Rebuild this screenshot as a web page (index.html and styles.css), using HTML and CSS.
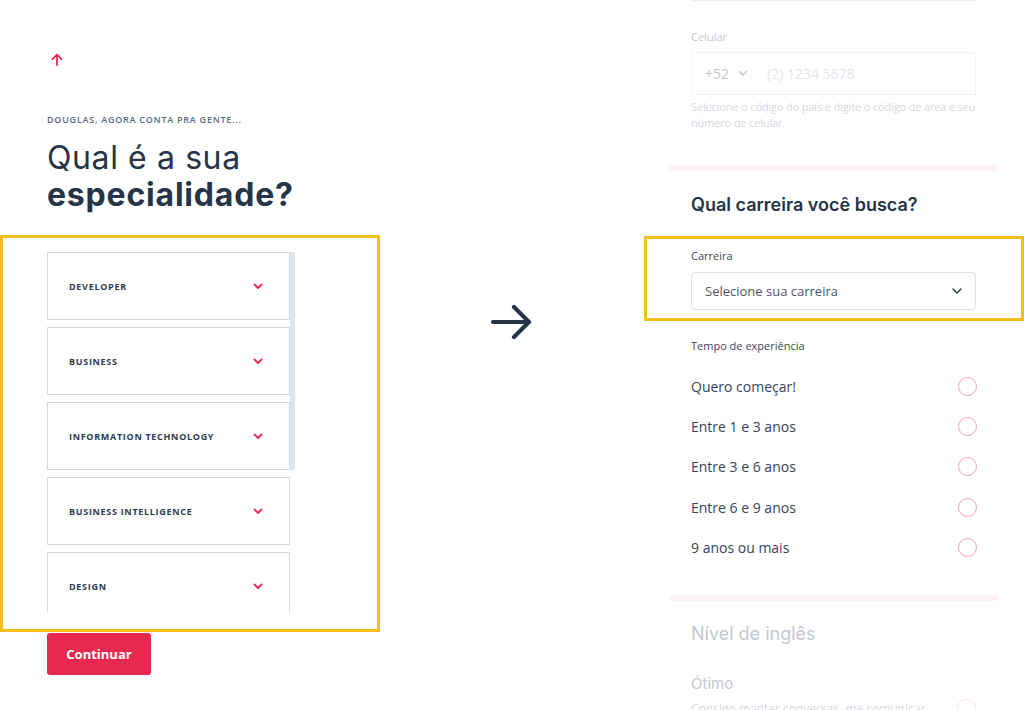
FILE: index.html
```html
<!DOCTYPE html>
<html lang="pt-BR">
<head>
  <meta charset="UTF-8">
  <title>Especialidade</title>
  <link rel="stylesheet" href="styles.css">
</head>
<body>
  <div class="page">

    <!-- Left: old flow -->
    <section class="left">
      <div class="back">
        <svg width="12" height="13" viewBox="0 0 12 13"><path d="M6 12V2M1.5 6.2L6 1.5l4.5 4.7" fill="none" stroke="#e8294f" stroke-width="1.8" stroke-linecap="round" stroke-linejoin="round"/></svg>
      </div>
      <p class="eyebrow">DOUGLAS, AGORA CONTA PRA GENTE...</p>
      <h1 class="title">Qual é a sua<br><strong>especialidade?</strong></h1>

      <div class="highlight highlight-left">
        <div class="list">
          <div class="cards">
            <div class="card"><span>DEVELOPER</span><svg class="chev" width="10" height="7" viewBox="0 0 10 7"><path d="M1.5 1.5L5 5l3.5-3.5" fill="none" stroke="#e8294f" stroke-width="1.8" stroke-linecap="round" stroke-linejoin="round"/></svg></div>
            <div class="card"><span>BUSINESS</span><svg class="chev" width="10" height="7" viewBox="0 0 10 7"><path d="M1.5 1.5L5 5l3.5-3.5" fill="none" stroke="#e8294f" stroke-width="1.8" stroke-linecap="round" stroke-linejoin="round"/></svg></div>
            <div class="card"><span>INFORMATION TECHNOLOGY</span><svg class="chev" width="10" height="7" viewBox="0 0 10 7"><path d="M1.5 1.5L5 5l3.5-3.5" fill="none" stroke="#e8294f" stroke-width="1.8" stroke-linecap="round" stroke-linejoin="round"/></svg></div>
            <div class="card"><span>BUSINESS INTELLIGENCE</span><svg class="chev" width="10" height="7" viewBox="0 0 10 7"><path d="M1.5 1.5L5 5l3.5-3.5" fill="none" stroke="#e8294f" stroke-width="1.8" stroke-linecap="round" stroke-linejoin="round"/></svg></div>
            <div class="card"><span>DESIGN</span><svg class="chev" width="10" height="7" viewBox="0 0 10 7"><path d="M1.5 1.5L5 5l3.5-3.5" fill="none" stroke="#e8294f" stroke-width="1.8" stroke-linecap="round" stroke-linejoin="round"/></svg></div>
          </div>
          <div class="scrollbar"><div class="thumb"></div></div>
        </div>
      </div>

      <button class="btn-continue">Continuar</button>
    </section>

    <!-- Middle arrow -->
    <div class="middle">
      <svg width="44" height="40" viewBox="0 0 44 40"><path d="M3 20h36M24 5l15 15-15 15" fill="none" stroke="#253447" stroke-width="4.2" stroke-linecap="round" stroke-linejoin="round"/></svg>
    </div>

    <!-- Right: new flow -->
    <section class="right">
      <div class="faded">
        <div class="prev-line"></div>
        <label class="field-label">Celular</label>
        <div class="phone">
          <span class="code">+52</span>
          <svg width="10" height="7" viewBox="0 0 10 7"><path d="M1.5 1.5L5 5l3.5-3.5" fill="none" stroke="#c3c8d2" stroke-width="1.5" stroke-linecap="round" stroke-linejoin="round"/></svg>
          <span class="placeholder">(2) 1234 5678</span>
        </div>
        <p class="help">Selecione o código do país e digite o código de área e seu número de celular.</p>
      </div>

      <div class="divider"></div>

      <h2 class="section-title">Qual carreira você busca?</h2>

      <div class="highlight highlight-right">
        <label class="field-label dark">Carreira</label>
        <div class="select">
          <span>Selecione sua carreira</span>
          <svg width="12" height="8" viewBox="0 0 12 8"><path d="M2 2l4 4 4-4" fill="none" stroke="#3b4658" stroke-width="1.6" stroke-linecap="round" stroke-linejoin="round"/></svg>
        </div>
      </div>

      <label class="field-label dark exp-label">Tempo de experiência</label>
      <ul class="options">
        <li><span>Quero começar!</span><i class="radio"></i></li>
        <li><span>Entre 1 e 3 anos</span><i class="radio"></i></li>
        <li><span>Entre 3 e 6 anos</span><i class="radio"></i></li>
        <li><span>Entre 6 e 9 anos</span><i class="radio"></i></li>
        <li><span>9 anos ou mais</span><i class="radio"></i></li>
      </ul>

      <div class="divider divider-low"></div>

      <div class="faded">
        <h2 class="section-title light">Nível de inglês</h2>
        <p class="level">Ótimo</p>
        <div class="level-row">
          <span>Consigo manter conversas, me comunicar</span>
          <i class="radio pale"></i>
        </div>
      </div>
    </section>

  </div>
</body>
</html>
```

FILE: styles.css
```css
body {
  margin: 0;
  background: #fff;
  font-family: "Open Sans", Arial, sans-serif;
  color: #263449;
  overflow: hidden;
}

.page {
  display: flex;
  width: 1024px;
  height: 710px;
}

/* Left column */
.left {
  width: 380px;
  flex-shrink: 0;
}

.back {
  padding: 53px 0 0 51px;
  height: 13px;
  line-height: 0;
}

.eyebrow {
  margin: 47px 0 0 47px;
  font-size: 9px;
  letter-spacing: 0.75px;
  color: #5b6a80;
  font-weight: 600;
}

.title {
  margin: 13px 0 0 47px;
  font-family: Inter, "Open Sans", sans-serif;
  font-size: 32px;
  font-weight: 400;
  line-height: 37px;
  color: #253447;
  letter-spacing: 0.6px;
}

.title strong {
  font-weight: 700;
  letter-spacing: 0.8px;
}

.highlight {
  border: 3px solid #f0bf1c;
  box-sizing: border-box;
}

.highlight-left {
  margin-top: 22px;
  height: 397px;
  padding: 14px 0 0 44px;
}

.list {
  display: flex;
  height: 361px;
  overflow: hidden;
}

.cards {
  width: 243px;
  display: flex;
  flex-direction: column;
  gap: 7px;
}

.card {
  flex-shrink: 0;
  height: 68px;
  box-sizing: border-box;
  border: 1px solid #d3d8e1;
  display: flex;
  align-items: center;
  justify-content: space-between;
  padding: 0 26px 0 21px;
  font-size: 9px;
  font-weight: 700;
  letter-spacing: 0.7px;
  color: #2e3b50;
}

.scrollbar {
  width: 5px;
}

.thumb {
  height: 218px;
  background: #dfe4ee;
}

.btn-continue {
  margin: 1px 0 0 47px;
  width: 104px;
  height: 42px;
  border: none;
  border-radius: 3px;
  background: #e8294f;
  color: #fff;
  font-family: "Open Sans", sans-serif;
  font-size: 13px;
  font-weight: 700;
}

/* Middle */
.middle {
  width: 264px;
  flex-shrink: 0;
  display: flex;
  justify-content: center;
  padding-top: 302px;
  box-sizing: border-box;
}

/* Right column */
.right {
  width: 380px;
  flex-shrink: 0;
}

.faded {
  padding: 0 48px 0 47px;
}

.prev-line {
  height: 1px;
  background: #eceef6;
}

.field-label {
  display: block;
  font-size: 11px;
  color: #c4c8d2;
  line-height: 16px;
}

.faded .field-label {
  margin-top: 28px;
}

.field-label.dark {
  color: #3b4658;
}

.phone {
  margin-top: 7px;
  height: 43px;
  box-sizing: border-box;
  border: 1px solid #f2f3f6;
  display: flex;
  align-items: center;
  padding-left: 13px;
  font-size: 14px;
}

.phone .code {
  color: #bfc4ce;
  margin-right: 9px;
}

.phone .placeholder {
  margin-left: 19px;
  color: #e4e6eb;
}

.help {
  margin: 4px 0 0;
  font-size: 11px;
  letter-spacing: -0.15px;
  line-height: 16px;
  color: #d6d9e0;
}

.divider {
  margin: 34px 26px 0 26px;
  height: 6px;
  background: #fdf3f4;
}

.section-title {
  margin: 22px 47px 0;
  font-family: Inter, "Open Sans", sans-serif;
  font-size: 18px;
  font-weight: 600;
  line-height: 24px;
  color: #253447;
}

.highlight-right {
  margin-top: 19px;
  height: 85px;
  padding: 9px 45px 0 44px;
}

.select {
  margin-top: 8px;
  height: 38px;
  box-sizing: border-box;
  border: 1px solid #dde2ee;
  border-radius: 4px;
  display: flex;
  align-items: center;
  justify-content: space-between;
  padding: 0 12px 0 13px;
  font-size: 13px;
  color: #4a5568;
}

.exp-label {
  margin: 17px 47px 0;
}

.options {
  list-style: none;
  margin: 12px 0 0;
  padding: 0 47px;
}

.options li {
  height: 40.3px;
  display: flex;
  align-items: center;
  justify-content: space-between;
  font-size: 14px;
  color: #37445a;
}

.radio {
  width: 19px;
  height: 19px;
  border: 1.5px solid #f4a5b5;
  border-radius: 50%;
  box-sizing: border-box;
}

.radio.pale {
  border-color: #fbe0e6;
}

.divider-low {
  margin-top: 28px;
}

.section-title.light {
  margin: 21px 0 0;
  font-weight: 400;
  color: #c3c8d2;
}

.level {
  margin: 28px 0 0;
  font-family: Inter, "Open Sans", sans-serif;
  font-size: 15px;
  color: #c3c8d2;
}

.level-row {
  margin-top: 6px;
  display: flex;
  justify-content: space-between;
  align-items: center;
  font-size: 12px;
  color: #d5d8df;
}
```
